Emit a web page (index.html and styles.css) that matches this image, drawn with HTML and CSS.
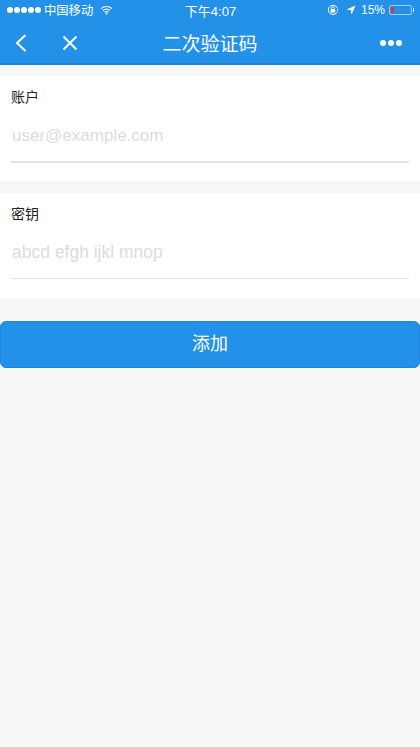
FILE: index.html
```html
<!DOCTYPE html>
<html lang="zh-CN">
<head>
<meta charset="utf-8">
<title>二次验证码</title>
<link rel="stylesheet" href="styles.css">
</head>
<body>
<header class="top">
  <div class="status">
    <div class="status-left">
      <span class="dots"><i></i><i></i><i></i><i></i><i></i></span>
      <span class="carrier">中国移动</span>
      <svg class="wifi" width="13" height="10" viewBox="0 0 13 10"><path d="M1 3.600C4.200.8 8.800.8 12 3.600M2.900 5.500c2.200-1.800 5-1.800 7.200 0M4.800 7.300c1.100-.8 2.300-.8 3.400 0" fill="none" stroke="#fff" stroke-width="1.200"/><circle cx="6.500" cy="8.800" r=".9" fill="#fff"/></svg>
    </div>
    <span class="time">下午4:07</span>
    <div class="status-right">
      <svg class="lock" width="12" height="12" viewBox="0 0 12 12"><path d="M10.200 7.800A4.600 4.600 0 1 1 10.200 4" fill="none" stroke="#fff" stroke-width="1"/><path d="M10 4.600l1.600 1.200-1.600 1.200z" fill="#fff"/><rect x="3.600" y="5.200" width="4.600" height="3.400" fill="#fff"/><path d="M4.500 5.200V4.200a1.400 1.400 0 0 1 2.800 0v1" fill="none" stroke="#fff" stroke-width=".9"/></svg>
      <svg class="arrow" width="10" height="10" viewBox="0 0 10 10"><path d="M9.600.4L.4 4.600l4.400.6.700 4.400z" fill="#fff"/></svg>
      <span class="pct">15%</span>
      <span class="battery"><span class="charge"></span></span>
      <span class="nub"></span>
    </div>
  </div>
  <nav class="bar">
    <div class="bar-left">
      <svg width="14" height="20" viewBox="0 0 14 20"><path d="M11.500 2L3 10l8.500 8" fill="none" stroke="#fff" stroke-width="2"/></svg>
      <svg width="18" height="18" viewBox="0 0 18 18"><path d="M2.500 2.500l13 13M15.500 2.500l-13 13" fill="none" stroke="#fff" stroke-width="2"/></svg>
    </div>
    <h1 class="title">二次验证码</h1>
    <div class="more"><i></i><i></i><i></i></div>
  </nav>
</header>
<main>
  <section class="card card-account">
    <label class="label">账户</label>
    <div class="field">user@example.com</div>
  </section>
  <section class="card card-key">
    <label class="label">密钥</label>
    <div class="field">abcd efgh ijkl mnop</div>
  </section>
  <button class="add">添加</button>
</main>
</body>
</html>
```
FILE: styles.css
```css
* { box-sizing: border-box; }
html, body { margin: 0; height: 100%; }
body {
  background: #f7f7f7;
  font-family: "Noto Sans CJK SC", "Liberation Sans", sans-serif;
  overflow: hidden;
}
.top {
  height: 65px;
  background: #2391e8;
  border-bottom: 2px solid #1e86d8;
  color: #fff;
}
.status {
  height: 20px;
  display: grid;
  grid-template-columns: 1fr auto 1fr;
  align-items: center;
  padding: 0 6px 0 7px;
  font-size: 12.300px;
}
.status-left, .status-right { display: flex; align-items: center; }
.status-right { justify-content: flex-end; }
.dots { display: flex; gap: 1px; margin-right: 3px; }
.dots i { width: 6px; height: 6px; border-radius: 50%; background: #fff; }
.carrier { line-height: 20px; }
.wifi { margin-left: 7px; }
.time { font-family: "Liberation Sans", "Noto Sans CJK SC", sans-serif; font-size: 13px; }
.lock { margin-right: 7px; }
.arrow { margin-right: 5px; }
.pct { font-family: "Liberation Sans", sans-serif; font-size: 12px; margin-right: 4px; }
.battery {
  width: 23px;
  height: 10px;
  border: 1px solid rgba(255, 255, 255, .55);
  border-radius: 2px;
  padding: 1px;
  display: flex;
}
.charge { width: 3px; background: #e8352a; }
.nub { width: 1px; height: 4px; background: #fff; margin-left: 1px; }
.bar {
  height: 45px;
  display: grid;
  grid-template-columns: 1fr auto 1fr;
  align-items: center;
  padding: 0 18px 0 14px;
}
.bar-left { display: flex; align-items: center; gap: 33px; }
.title { margin: 0 0 0 4px; font-size: 19px; font-weight: 400; line-height: 1; }
.more { display: flex; justify-content: flex-end; gap: 2px; }
.more i { width: 6px; height: 6px; border-radius: 50%; background: #fff; }
.card {
  background: #fff;
  height: 105px;
  padding: 10px 11px 0;
}
.card-account { margin-top: 11px; }
.card-key { margin-top: 12px; }
.label {
  display: block;
  font-size: 14px;
  line-height: 20px;
  color: #222;
}
.field {
  margin-top: 10px;
  padding-left: 1px;
  font-family: "Liberation Sans", sans-serif;
  line-height: 20px;
  color: #dcdcdc;
}
.card-account .field { height: 47px; padding-top: 10px; font-size: 17px; border-bottom: 2px solid #e4e4e4; }
.card-key .field { height: 46px; padding-top: 9px; font-size: 17.500px; border-bottom: 1.500px solid #e4e4e4; }
.add {
  display: block;
  width: 100%;
  height: 47px;
  margin-top: 23px;
  background: #2391e8;
  border: 1px solid #1e86d8;
  border-radius: 6px;
  color: #fff;
  font-family: "Noto Sans CJK SC", sans-serif;
  font-size: 18px;
  padding: 0 0 5px;
}
```
